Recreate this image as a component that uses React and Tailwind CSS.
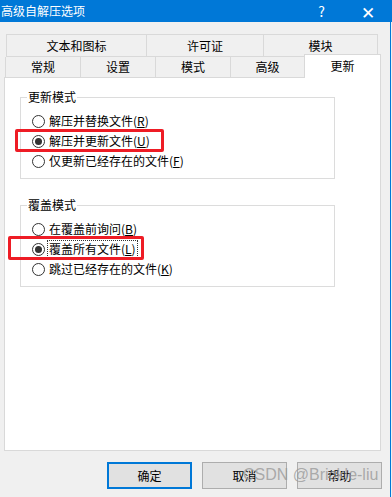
import React from 'react';

const font = { fontFamily: '"Noto Sans CJK SC", "Noto Sans", sans-serif' };

function Radio({ checked, label, hotkey, focused }) {
  return (
    <div className="flex items-center h-[20px] pl-[11px]">
      <span className="w-[13px] h-[13px] rounded-full border border-[#333] bg-white flex items-center justify-center">
        {checked && <span className="w-[7px] h-[7px] rounded-full bg-[#333]" />}
      </span>
      <span className={`ml-[3px] px-[1px] leading-[16px] ${focused ? 'outline outline-1 outline-dotted outline-[#333]' : ''}`}>
        {label}(<span className="underline">{hotkey}</span>)
      </span>
    </div>
  );
}

function Group({ title, items }) {
  return (
    <div className="relative ml-[15px] w-[315px] h-[82px] border border-[#dcdcdc] pt-[13px]">
      <div className="absolute -top-[9px] left-[6px] bg-white px-[1px] leading-[16px]">{title}</div>
      {items.map((it) => (
        <Radio key={it.label} {...it} />
      ))}
    </div>
  );
}

export default function App() {
  const row1 = [
    ['文本和图标', 'w-[140px]'],
    ['许可证', 'w-[117px]'],
    ['模块', 'w-[115px]'],
  ];
  const row2 = ['常规', '设置', '模式', '高级'];

  return (
    <div className="relative w-[392px] h-[497px] bg-[#f0f0f0] overflow-hidden text-[12px] text-black" style={font}>
      <div className="absolute right-[1px] top-0 bottom-0 w-px bg-[#0078d7]" />

      {/* title bar */}
      <div className="h-[22px] bg-[#0078d7] text-white flex items-center pl-[1px]">
        <span className="leading-[16px]">高级自解压选项</span>
        <span className="ml-auto mr-[36px] text-[14px]">?</span>
        <span className="mr-[17px] text-[17px] font-light leading-none">✕</span>
      </div>

      {/* tabs */}
      <div className="mt-[12px] ml-[6px] flex">
        {row1.map(([t, w]) => (
          <div key={t} className={`${w} h-[23px] border border-r-0 last:border-r border-[#d9d9d9] flex items-center justify-center`}>
            {t}
          </div>
        ))}
      </div>
      <div className="ml-[5px] flex items-end -mt-[3px] relative z-10">
        {row2.map((t, i) => (
          <div key={t} className={`${i === 3 ? 'w-[74px]' : 'w-[75px]'} h-[20px] border-l border-[#d9d9d9] flex items-center justify-center`}>
            {t}
          </div>
        ))}
        <div className="w-[77px] h-[24px] -mb-[1px] bg-white border border-b-0 border-[#d9d9d9] flex items-center justify-center pb-[2px]">
          更新
        </div>
      </div>

      {/* panel */}
      <div className="ml-[4px] w-[377px] h-[374px] bg-white border border-[#d9d9d9] pt-[19px]">
        <Group
          title="更新模式"
          items={[
            { label: '解压并替换文件', hotkey: 'R' },
            { label: '解压并更新文件', hotkey: 'U', checked: true },
            { label: '仅更新已经存在的文件', hotkey: 'F' },
          ]}
        />
        <div className="h-[26px]" />
        <Group
          title="覆盖模式"
          items={[
            { label: '在覆盖前询问', hotkey: 'B' },
            { label: '覆盖所有文件', hotkey: 'L', checked: true, focused: true },
            { label: '跳过已经存在的文件', hotkey: 'K' },
          ]}
        />
      </div>

      {/* buttons */}
      <div className="mt-[11px] ml-[107px] flex gap-[10px]">
        <button className="w-[85px] h-[27px] bg-[#e1e1e1] border-2 border-[#0078d7]">确定</button>
        <button className="w-[85px] h-[27px] bg-[#e1e1e1] border border-[#adadad]">取消</button>
        <button className="w-[85px] h-[27px] bg-[#e1e1e1] border border-[#adadad]">帮助</button>
      </div>

      {/* annotations */}
      <div className="absolute left-[15px] top-[129px] w-[149px] h-[23px] border-[3px] border-[#ee1c25] rounded-[2px]" />
      <div className="absolute left-[8px] top-[236px] w-[136px] h-[24px] border-[3px] border-[#ee1c25] rounded-[2px]" />
      <div className="absolute left-[243px] top-[464px] text-[16px] leading-[22px] text-[#9a9a9a]/80" style={{ fontFamily: '"Liberation Sans", Arial, sans-serif' }}>
        CSDN @Brickle-liu
      </div>
    </div>
  );
}
